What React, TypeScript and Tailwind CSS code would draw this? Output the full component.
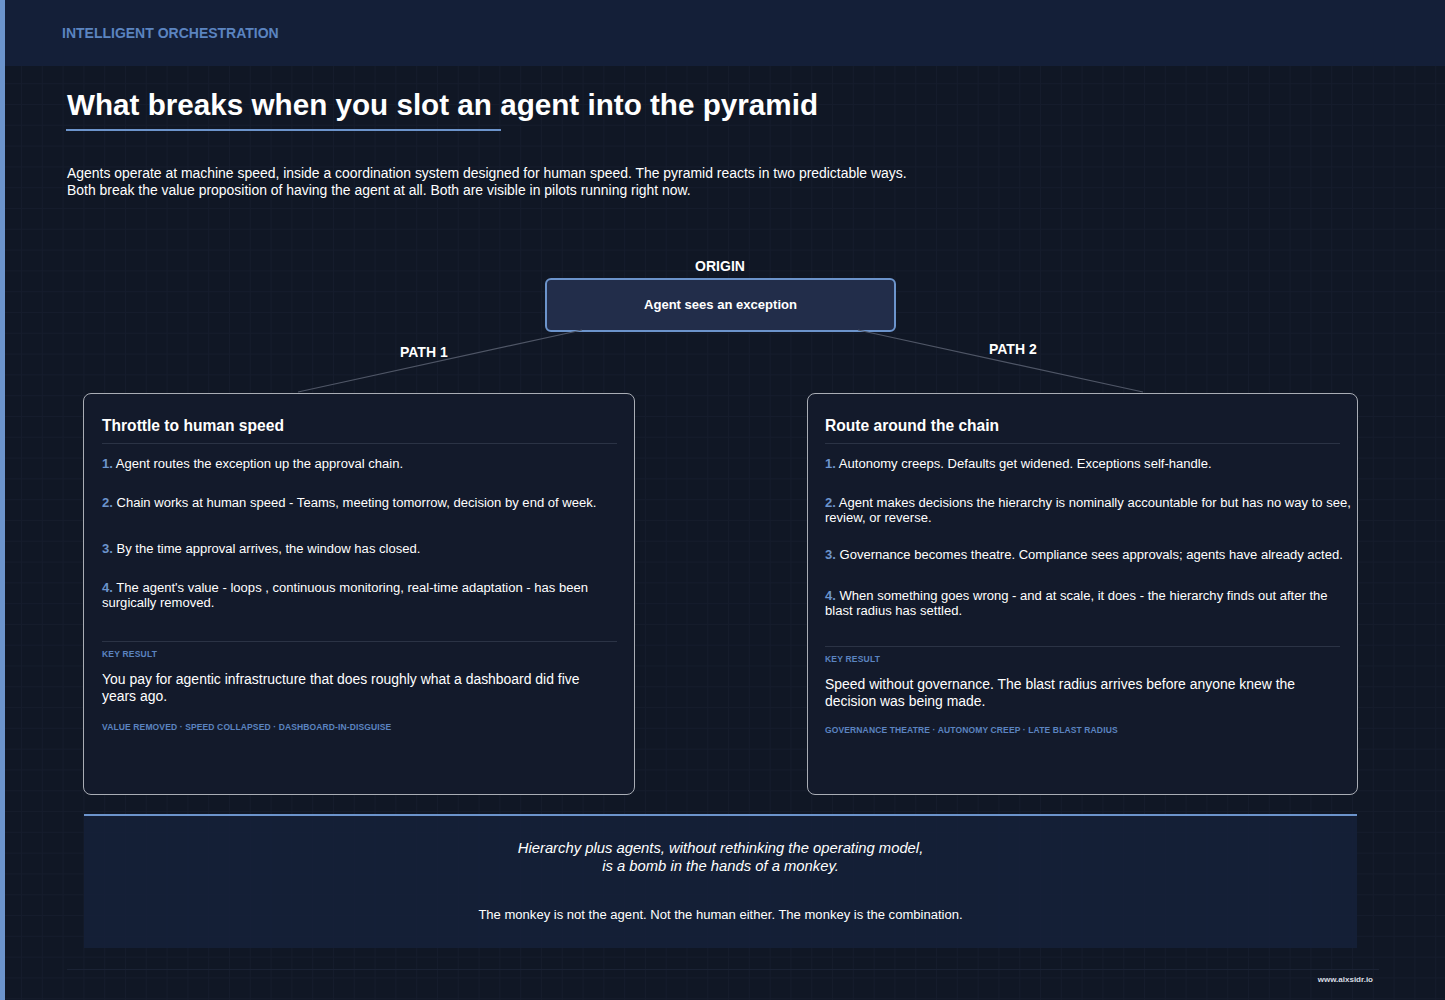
const steps1 = [
  { n: "1.", t: "Agent routes the exception up the approval chain.", cls: "h-[39px]" },
  { n: "2.", t: "Chain works at human speed - Teams, meeting tomorrow, decision by end of week.", cls: "h-[46px]" },
  { n: "3.", t: "By the time approval arrives, the window has closed.", cls: "h-[39px]" },
  { n: "4.", t: "The agent's value - loops , continuous monitoring, real-time adaptation - has been surgically removed.", cls: "h-[61px]" },
];

const steps2 = [
  { n: "1.", t: "Autonomy creeps. Defaults get widened. Exceptions self-handle.", cls: "h-[39px]" },
  { n: "2.", t: "Agent makes decisions the hierarchy is nominally accountable for but has no way to see, review, or reverse.", cls: "h-[52px]" },
  { n: "3.", t: "Governance becomes theatre. Compliance sees approvals; agents have already acted.", cls: "h-[41px]" },
  { n: "4.", t: "When something goes wrong - and at scale, it does - the hierarchy finds out after the blast radius has settled.", cls: "h-[58px]" },
];

function PathCard({ title, steps, result, tags, tagsCls, cardCls }: { title: string; steps: { n: string; t: string; cls: string }[]; result: string; tags: string; tagsCls: string; cardCls: string }) {
  return (
    <div className={`relative h-[402px] shrink-0 rounded-lg border border-[#a9adb5] bg-[#131a2b] pt-[22px] pr-[3px] ${cardCls}`}>
      <h3 className="text-[15.6px] leading-[19px] font-bold text-white">{title}</h3>
      <div className="mt-[8px] mr-[14px] border-t border-[#2b3345]" />
      <div className="mt-[12px] text-[13.05px] leading-[15px] text-white">
        {steps.map((s) => (
          <p key={s.n} className={s.cls}>
            <span className="font-bold text-[#6c94cc]">{s.n}</span> {s.t}
          </p>
        ))}
      </div>
      <div className="mr-[14px] border-t border-[#2b3345]" />
      <div className="mt-[7px] text-[8.5px] leading-[10px] font-bold tracking-[0.2px] text-[#5b84c0]">KEY RESULT</div>
      <p className="mt-[12px] pr-[32px] text-[13.95px] leading-[17px] text-white">{result}</p>
      <div className={`text-[8.5px] leading-[10px] font-bold tracking-[0.13px] text-[#5b84c0] ${tagsCls}`}>{tags}</div>
    </div>
  );
}

export default function App() {
  return (
    <div className="relative h-[1000px] w-[1445px] overflow-hidden border-l-[5px] border-[#6c94cc] bg-[#101725] bg-[linear-gradient(#151c2c_1px,transparent_1px),linear-gradient(90deg,#151c2c_1px,transparent_1px)] bg-[size:20.8px_20.8px] bg-[position:16px_0] font-['Liberation_Sans',Arial,sans-serif] text-white">
      <header className="flex h-[66px] items-center bg-[#141f38] pl-[57px]">
        <span className="text-[14px] font-bold text-[#5b84c0]">INTELLIGENT ORCHESTRATION</span>
      </header>

      <div className="pl-[62px] pt-[21px]">
        <h1 className="text-[29.65px] leading-[36px] font-bold">What breaks when you slot an agent into the pyramid</h1>
        <div className="ml-[-1px] mt-[6px] h-[2px] w-[435px] bg-[#6c94cc]" />
        <p className="mt-[34px] text-[13.95px] leading-[17px] text-white">
          Agents operate at machine speed, inside a coordination system designed for human speed. The pyramid reacts in two predictable ways.
          <br />
          Both break the value proposition of having the agent at all. Both are visible in pilots running right now.
        </p>
      </div>

      <section className="relative mt-[59px]">
        {/* connectors sit under the cards */}
        <svg className="absolute left-0 top-[20px] h-[140px] w-[1440px]" fill="none">
          <line x1="577" y1="52" x2="293" y2="114" stroke="#4f5666" strokeWidth="1.2" />
          <line x1="853" y1="52" x2="1138" y2="114" stroke="#4f5666" strokeWidth="1.2" />
        </svg>
        <div className="pr-[10px] text-center text-[14px] leading-[17px] font-bold">ORIGIN</div>
        <div className="ml-[540px] mt-[3px] flex h-[54px] w-[351px] items-center justify-center rounded-md border-2 border-[#6c94cc] bg-[#222d4a] text-[13.05px] font-bold">
          Agent sees an exception
        </div>
        <span className="absolute left-[395px] top-[86px] text-[14px] leading-[17px] font-bold">PATH 1</span>
        <span className="absolute left-[984px] top-[83px] text-[14px] leading-[17px] font-bold">PATH 2</span>

        <div className="relative mt-[61px] flex justify-between pl-[78px] pr-[87px]">
          <PathCard
            title="Throttle to human speed"
            steps={steps1}
            result="You pay for agentic infrastructure that does roughly what a dashboard did five years ago."
            tags="VALUE REMOVED · SPEED COLLAPSED · DASHBOARD-IN-DISGUISE"
            tagsCls="mt-[17px]"
            cardCls="w-[552px] pl-[18px]"
          />
          <PathCard
            title="Route around the chain"
            steps={steps2}
            result="Speed without governance. The blast radius arrives before anyone knew the decision was being made."
            tags="GOVERNANCE THEATRE · AUTONOMY CREEP · LATE BLAST RADIUS"
            tagsCls="mt-[15px]"
            cardCls="w-[551px] pl-[17px]"
          />
        </div>
      </section>

      <div className="ml-[79px] mt-[19px] h-[134px] w-[1273px] border-t-2 border-[#6c94cc] bg-[#152039]/90 pt-[23px] text-center">
        <p className="text-[14.8px] leading-[18px] italic">
          Hierarchy plus agents, without rethinking the operating model,
          <br />
          is a bomb in the hands of a monkey.
        </p>
        <p className="mt-[31px] text-[13.05px] leading-[17px]">The monkey is not the agent. Not the human either. The monkey is the combination.</p>
      </div>

      <div className="ml-[62px] mt-[21px] w-[1312px] border-t border-[#1a2234]" />
      <div className="absolute right-[72px] top-[975px] text-[8px] leading-[10px] font-bold text-[#d8dce4]">www.alxsidr.io</div>
    </div>
  );
}
